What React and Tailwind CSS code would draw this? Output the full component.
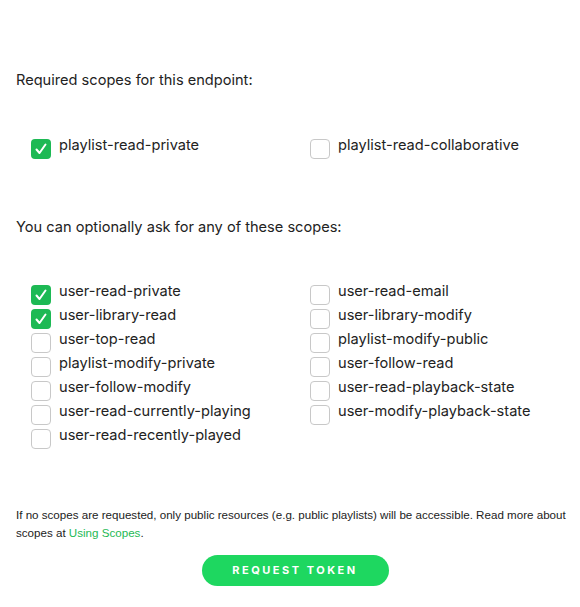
import React, { useState } from 'react';

const required = [
  { name: 'playlist-read-private', checked: true },
  { name: 'playlist-read-collaborative', checked: false },
];

const optionalLeft = [
  { name: 'user-read-private', checked: true },
  { name: 'user-library-read', checked: true },
  { name: 'user-top-read', checked: false },
  { name: 'playlist-modify-private', checked: false },
  { name: 'user-follow-modify', checked: false },
  { name: 'user-read-currently-playing', checked: false },
  { name: 'user-read-recently-played', checked: false },
];

const optionalRight = [
  { name: 'user-read-email', checked: false },
  { name: 'user-library-modify', checked: false },
  { name: 'playlist-modify-public', checked: false },
  { name: 'user-follow-read', checked: false },
  { name: 'user-read-playback-state', checked: false },
  { name: 'user-modify-playback-state', checked: false },
];

const Scope = ({ name, initial }) => {
  const [checked, setChecked] = useState(initial);
  return (
    <label className="flex items-start gap-2 h-6 cursor-pointer" onClick={() => setChecked(!checked)}>
      {checked ? (
        <span className="mt-[6px] w-5 h-5 shrink-0 rounded-[4px] bg-[#1db954] flex items-center justify-center">
          <svg width="14" height="14" viewBox="0 0 14 14" fill="none">
            <path d="M2.5 7.5 L5.5 11 L11.5 2.5" stroke="white" strokeWidth="2" strokeLinecap="round" strokeLinejoin="round" />
          </svg>
        </span>
      ) : (
        <span className="mt-[6px] w-5 h-5 shrink-0 rounded-[4px] border border-[#c8c8c8] bg-white" />
      )}
      <span className="leading-6 text-[14.6px] text-[#222]">{name}</span>
    </label>
  );
};

export default function App() {
  return (
    <div className="w-[580px] h-[607px] bg-white overflow-hidden" style={{ fontFamily: 'Inter, "Noto Sans", sans-serif' }}>
      <div className="pt-[68px] pl-4">
        <p className="leading-6 text-[14.6px] text-[#222]">Required scopes for this endpoint:</p>
        <div className="mt-[41px] pl-[15px] grid grid-cols-[279px_1fr]">
          {required.map((s) => (
            <Scope key={s.name} name={s.name} initial={s.checked} />
          ))}
        </div>

        <p className="mt-[58px] leading-6 text-[14.6px] text-[#222]">You can optionally ask for any of these scopes:</p>
        <div className="mt-[40px] pl-[15px] grid grid-cols-[279px_1fr]">
          <div className="flex flex-col">
            {optionalLeft.map((s) => (
              <Scope key={s.name} name={s.name} initial={s.checked} />
            ))}
          </div>
          <div className="flex flex-col">
            {optionalRight.map((s) => (
              <Scope key={s.name} name={s.name} initial={s.checked} />
            ))}
          </div>
        </div>

        <p className="mt-[59px] pr-2 text-[11.6px] leading-[18px] text-[#222]" style={{ fontFamily: '"Liberation Sans", Arial, sans-serif' }}>
          If no scopes are requested, only public resources (e.g. public playlists) will be accessible. Read more about scopes at <a href="#" className="text-[#1db954]">Using Scopes</a>.
        </p>
      </div>

      <div className="mt-[13px] flex justify-center">
        <button className="w-[187px] h-[31px] rounded-full bg-[#1ed760] text-white text-[11px] font-bold tracking-[2.5px] ml-[10px]">
          REQUEST TOKEN
        </button>
      </div>
    </div>
  );
}
